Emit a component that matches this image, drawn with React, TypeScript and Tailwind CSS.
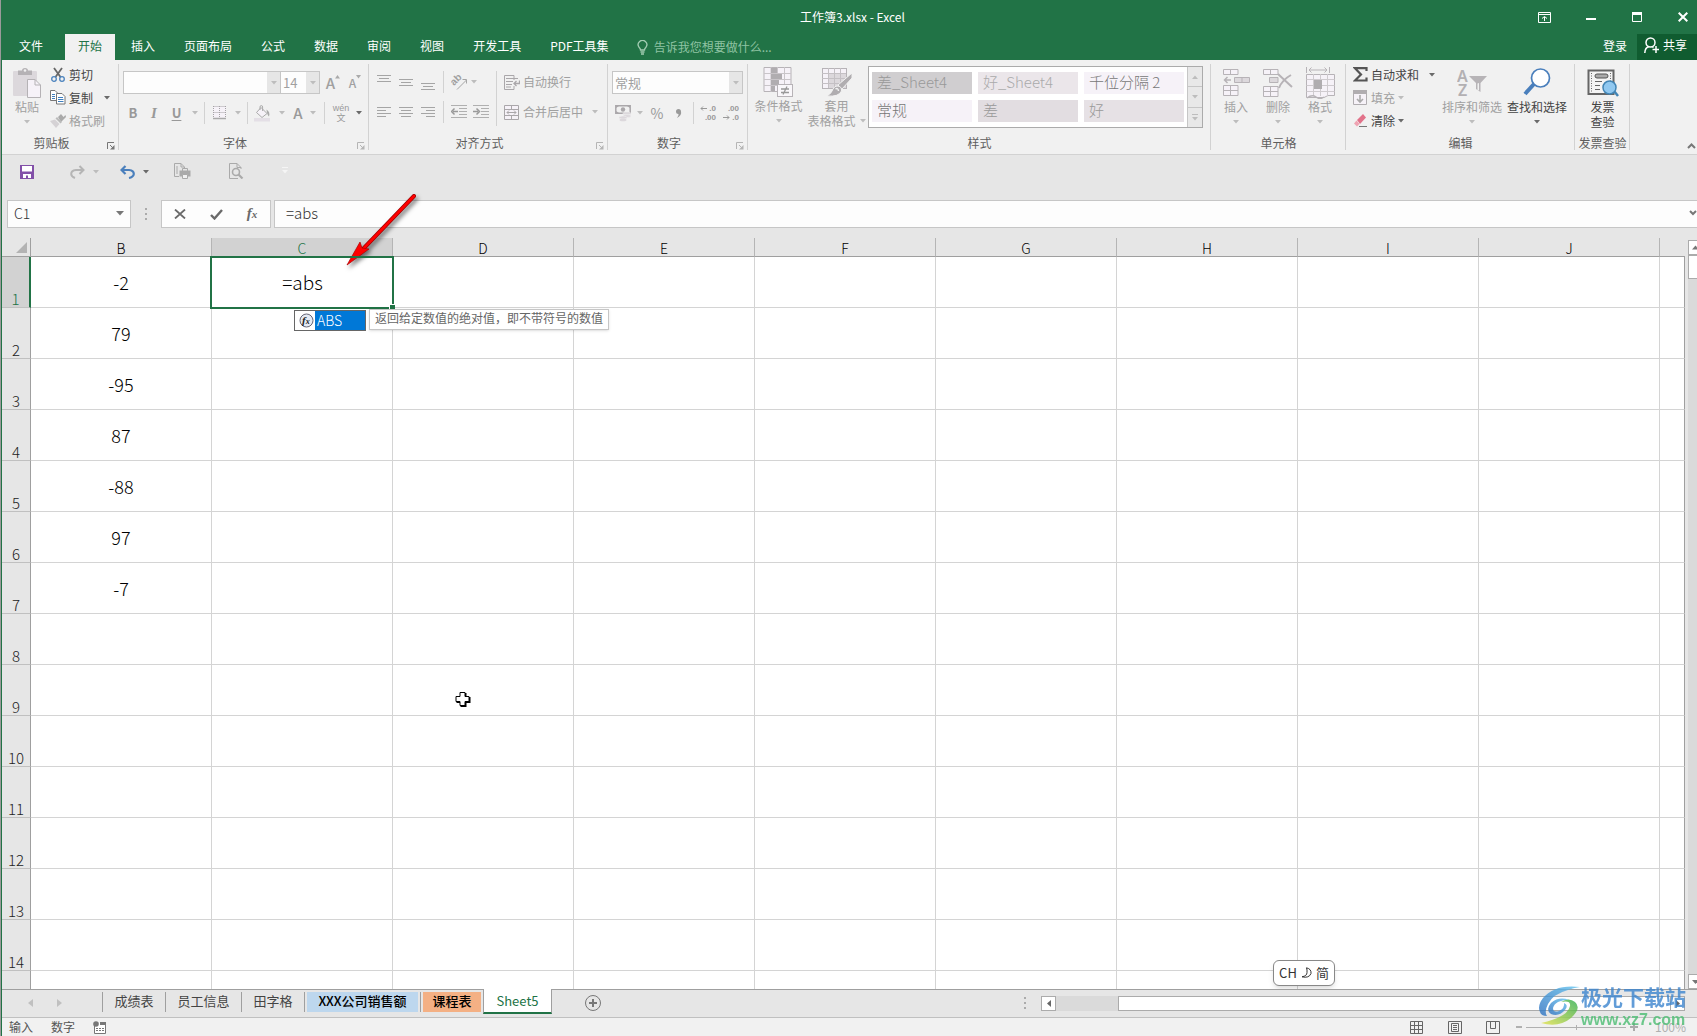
import type { ReactNode } from "react";
import clsx from "clsx";

/* ---------- shared pieces ---------- */

function Caret({ dark = false }: { dark?: boolean }) {
  return (
    <svg width="6" height="4" viewBox="0 0 6 4" className={clsx("shrink-0", dark ? "text-[#6a6a6a]" : "text-[#bdbdbd]")}>
      <path d="M0 0H6L3 3.5Z" fill="currentColor" />
    </svg>
  );
}

function Launcher({ dark = false }: { dark?: boolean }) {
  return (
    <svg width="8" height="8" viewBox="0 0 8 8" className={dark ? "text-[#777]" : "text-[#b5b5b5]"}>
      <path d="M.5 7V.5H7M3 3l3 3" fill="none" stroke="currentColor" />
      <path d="M7.5 3v4.500H3Z" fill="currentColor" />
    </svg>
  );
}

function Group({ label, width, launcher, children, className }: {
  label: string; width: string; launcher?: "dark" | "light"; children: ReactNode; className?: string;
}) {
  return (
    <section aria-label={label} className={clsx("relative flex shrink-0 flex-col", width)}>
      <div className={clsx("flex h-[75px] items-start", className)}>{children}</div>
      <div className={clsx("text-center leading-4 whitespace-nowrap text-[#5e5e5e]", launcher && "pr-[18px]")}>{label}</div>
      {launcher && (
        <button aria-label={label + "设置"} className="absolute right-1 bottom-1">
          <Launcher dark={launcher === "dark"} />
        </button>
      )}
      <span className="absolute top-1 right-0 h-[86px] w-px bg-[#d2d2d2]" />
    </section>
  );
}

function BigButton({ icon, lines, dark = false, caret = true, inlineCaret = false, width }: {
  icon: ReactNode; lines: string[]; dark?: boolean; caret?: boolean; inlineCaret?: boolean; width: string;
}) {
  return (
    <button className={clsx("flex shrink-0 flex-col items-center leading-[15px] whitespace-nowrap", width, dark ? "text-[#444]" : "text-[#a0a0a0]")}>
      <span className="flex h-8 items-center">{icon}</span>
      <span>{lines[0]}</span>
      {lines[1] && (
        <span className="flex items-center gap-1">
          {lines[1]}
          {inlineCaret && <Caret />}
        </span>
      )}
      {caret && !inlineCaret && (
        <span className="flex h-[15px] items-center"><Caret dark={dark} /></span>
      )}
    </button>
  );
}

function Combo({ label, value, width }: { label: string; value: string; width: string }) {
  return (
    <label className={clsx("relative flex h-[23px] border border-[#c6c6c6] bg-[#fdfdfd]", width)}>
      <select aria-label={label} defaultValue={value} className="w-full appearance-none bg-transparent px-0.5 text-[13px] leading-5 text-[#a0a0a0] outline-none">
        <option>{value}</option>
      </select>
      <span className="pointer-events-none absolute inset-y-0 right-0 flex w-[13px] items-center justify-center bg-[#e6e6e6]">
        <Caret />
      </span>
    </label>
  );
}

function IconButton({ label, children, width = "w-[22px]" }: { label: string; children: ReactNode; width?: string }) {
  return (
    <button aria-label={label} className={clsx("flex h-[22px] shrink-0 items-center justify-center", width)}>
      {children}
    </button>
  );
}

function CaretButton({ label, dark, width = "w-[16px]" }: { label: string; dark?: boolean; width?: string }) {
  return (
    <button aria-label={label} className={clsx("flex h-[22px] shrink-0 items-center justify-center", width)}>
      <Caret dark={dark} />
    </button>
  );
}

function Rule({ height = "h-[22px]" }: { height?: string }) {
  return <span className={clsx("w-px shrink-0 bg-[#d2d2d2]", height)} />;
}

/* ---------- icons ---------- */

const PasteIcon = () => (
  <svg width="30" height="32" viewBox="0 0 30 32">
    <rect x="1" y="4" width="24" height="25" rx="1" fill="#dcd8dc" />
    <path d="M6 8V3.500H10Q10 1 13 1T16 3.500H20V8Z" fill="#b5b2b5" />
    <circle cx="13" cy="3.500" r="1.300" fill="#f1f1f1" />
    <path d="M15.500 12.500H23L28.500 18V30.500H15.500Z" fill="#f6f2f8" stroke="#b5b2b5" />
    <path d="M23 12.500V18H28.500" fill="none" stroke="#b5b2b5" />
  </svg>
);
const ScissorsIcon = () => (
  <svg width="14" height="16" viewBox="0 0 14 16">
    <path d="M3 1L9.500 10M11 1L4.500 10" stroke="#666" strokeWidth="1.800" />
    <circle cx="3" cy="12" r="2.300" fill="none" stroke="#4a82bd" strokeWidth="1.300" />
    <circle cx="11" cy="12" r="2.300" fill="none" stroke="#4a82bd" strokeWidth="1.300" />
  </svg>
);
const CopyIcon = () => (
  <svg width="16" height="15" viewBox="0 0 16 15">
    <path d="M.5.5H5L7.500 3V10.500H.5Z" fill="#fff" stroke="#777" />
    <path d="M2 4.500H5M2 6.500H5M2 8.500H5" stroke="#3f7fbf" />
    <path d="M6.500 3.500H12L15 6.500V14H6.500Z" fill="#fff" stroke="#777" />
    <path d="M8 7.500H13M8 9.500H13.500M8 11.500H13.500" stroke="#3f7fbf" />
  </svg>
);
const BrushIcon = () => (
  <svg width="16" height="14" viewBox="0 0 16 14">
    <path d="M8 3L11 0 13.500 3 15.500 1 16 3 11 8Z" fill="#aaa" />
    <path d="M7 3L12 8 10.500 9.500 5.500 4.500Z" fill="#bbb" />
    <path d="M5 5.500L9.500 10 6 14 0 7Z" fill="#d5d2d5" />
  </svg>
);
const BordersIcon = () => (
  <svg width="14" height="14" viewBox="0 0 14 14">
    <rect width="13" height="12" fill="#f6f2f8" />
    <path d="M.5.5H13M.5 6.500H13M.5 0V12M6.500 0V12M12.500 0V12" stroke="#a5a2a5" strokeDasharray="1 1" fill="none" />
    <path d="M0 12.500H13" stroke="#aaa" strokeWidth="1.500" />
  </svg>
);
const BucketIcon = () => (
  <svg width="17" height="17" viewBox="0 0 17 17">
    <path d="M7 2.500L13 8.500 8 12.500 2.500 7.500Z" fill="#f6f2f8" stroke="#aaa" />
    <path d="M6 5V2Q6 .6 7.300.6T8.600 2V6" fill="none" stroke="#aaa" />
    <path d="M12.500 4.500Q16.500 7 15 11.500Q13 10 12.500 4.500Z" fill="#aaa" />
    <rect y="13" width="16" height="3.500" fill="#e4dfe6" />
  </svg>
);

function Lines({ rows, y }: { rows: [number, number][]; y: number }) {
  return (
    <svg width="14" height="16" viewBox="0 0 14 16">
      {rows.map(([x, w], i) => <rect key={i} x={x} y={y + i * 3} width={w} height="1" fill="#a5a5a5" />)}
    </svg>
  );
}
const OrientIcon = () => (
  <svg width="17" height="17" viewBox="0 0 17 17" fill="none" stroke="#a5a5a5">
    <text x="3" y="12" transform="rotate(-45 3 12)" fontFamily="Liberation Sans" fontSize="10" fontWeight="bold" fill="#a0a0a0" stroke="none">ab</text>
    <path d="M6 15.500L15.500 6M15.500 9.500V5.500H11.500" />
  </svg>
);
const IndentIcon = ({ flip = false }: { flip?: boolean }) => (
  <svg width="16" height="14" viewBox="0 0 16 14">
    <path d="M0 .5H16M8 3.500H16M8 6.500H16M8 9.500H16M0 12.500H16" stroke="#b0b0b0" />
    <path d={flip ? "M0 6.500H5M3.500 3.500L6.500 6.500 3.500 9.500" : "M7 6.500H2M3.500 3.500L.5 6.500 3.500 9.500"} stroke="#999" strokeWidth="1.500" fill="none" />
  </svg>
);
const WrapIcon = () => (
  <svg width="16" height="15" viewBox="0 0 16 15" fill="none" stroke="#aaa7aa">
    <path d="M10 .5H.5V14.500H10V11M10 .5V5" /><path d="M2 3.500H14M2 6.500H9M2 9.500H8M2 12H7" />
    <path d="M15.500 5.500V8.500H10.500M12.500 6L10 8.500 12.500 11" strokeWidth="1.300" />
  </svg>
);
const MergeIcon = () => (
  <svg width="16" height="15" viewBox="0 0 16 15" fill="none" stroke="#aaa7aa">
    <path fill="#f6f2f8" d="M.5.5H14.500V14.500H.5Z" /><path d="M.5 4.500H14.500M.5 10.500H14.500M7.500.5V4M7.500 11V14.500M3 7.500H12M5 5.500L3 7.500 5 9.500M10 5.500L12 7.500 10 9.500" />
  </svg>
);
const MoneyIcon = () => (
  <svg width="17" height="17" viewBox="0 0 17 17">
    <path d="M.8.8H15.200V8.200H.8Z" fill="#f1f1f1" stroke="#aaa7aa" strokeWidth="1.500" />
    <circle cx="8" cy="4.500" r="2.200" fill="#aaa7aa" /><path d="M1 3V1H4ZM12 1H15V3ZM1 6V8H4Z" fill="#aaa7aa" />
    <ellipse cx="12" cy="8.500" rx="4" ry="1.500" fill="#dcd8dc" stroke="#f1f1f1" strokeWidth=".5" /><ellipse cx="12" cy="11" rx="4" ry="1.500" fill="#dcd8dc" stroke="#f1f1f1" strokeWidth=".5" />
    <ellipse cx="8" cy="12.500" rx="4" ry="1.500" fill="#dcd8dc" stroke="#f1f1f1" strokeWidth=".5" /><ellipse cx="8" cy="15" rx="3.500" ry="1.300" fill="#dcd8dc" />
  </svg>
);
const Decimals = ({ more = false }: { more?: boolean }) => (
  <span className="relative flex w-4 flex-col text-right font-['Liberation_Sans',sans-serif] text-[8px] leading-[9px] font-bold text-[#999]">
    <span>{more ? ".0" : ".00"}</span>
    <span>{more ? ".00" : ".0"}</span>
    <svg width="7" height="5" viewBox="0 0 7 5" className={clsx("absolute left-0", more ? "top-0.5" : "bottom-0.5")}>
      <path d={more ? "M7 2.500H1M3 .5L1 2.500 3 4.500" : "M0 2.500H6M4 .5L6 2.500 4 4.500"} fill="none" stroke="#999" />
    </svg>
  </span>
);
const CondIcon = () => (
  <svg width="31" height="32" viewBox="0 0 31 32">
    <path d="M1 1.500H28V25.500H1Z" fill="#f6f2f8" stroke="#b7b3b7" />
    <path d="M8 1V26M14.500 1V26M21.500 1V26M1 7.500H28M1 13.500H28M1 19.500H28" stroke="#c9c5c9" />
    <path d="M8 2H14V7H8ZM8 8H19V13H8ZM8 14H16V19H8ZM8 20H12V25H8Z" fill="#b0adb0" />
    <rect x="14.500" y="18.500" width="15" height="12" fill="#f9f7fa" stroke="#b7b3b7" />
    <path d="M18 23H26M18 26.500H26M24 20.500L20 28.500" stroke="#999" strokeWidth="1.300" />
  </svg>
);
const TableFormatIcon = () => (
  <svg width="30" height="30" viewBox="0 0 30 30">
    <rect x=".5" y="1.500" width="24" height="20" fill="#f6f2f8" stroke="#b7b3b7" />
    <rect x="7" y="7" width="17" height="14" fill="#dcd8dc" />
    <path d="M6.500 1V21M12.500 1V21M18.500 1V21M0 6.500H24M0 11.500H24M0 16.500H24" stroke="#c4c0c4" />
    <path d="M30 6V11L20 22 16 18Z" fill="#b0adb0" stroke="#f1f1f1" />
    <path d="M15 19Q20 19 19.500 24Q17 30 5 29Q10 26 11 22Q12.500 19 15 19Z" fill="#b0adb0" stroke="#f1f1f1" />
    <path d="M13.500 22Q16 20.500 16.500 24" fill="none" stroke="#f1f1f1" strokeWidth="1.500" />
  </svg>
);
const InsertIcon = () => (
  <svg width="27" height="30" viewBox="0 0 27 30" fill="#f6f2f8" stroke="#b7b3b7">
    <path d="M.5 1.500H15V6.500H.5ZM7.500 1.500V6.500M.5 17.500H15V27.500H.5ZM7.500 17.500V27.500M.5 22.500H15" />
    <path d="M11.500 9.500H26.500V14.500H11.500ZM19 9.500V14.500" fill="#dcd8dc" />
    <path d="M8 12H2M4.500 9L1.500 12 4.500 15" fill="none" strokeWidth="1.500" />
  </svg>
);
const DeleteIcon = () => (
  <svg width="30" height="30" viewBox="0 0 30 30" fill="#f6f2f8" stroke="#b7b3b7">
    <path d="M.5 1.500H15V6.500H.5ZM7.500 1.500V6.500M.5 18.500H15V28.500H.5ZM7.500 18.500V28.500M.5 23.500H15" />
    <path d="M6.500 9.500H15V14.500H6.500Z" fill="#dcd8dc" />
    <path d="M15 6L29 19M28 7Q19 12 16 20" fill="none" strokeWidth="2" />
  </svg>
);
const FormatIcon = () => (
  <svg width="29" height="32" viewBox="0 0 29 32" fill="none" stroke="#b7b3b7">
    <path d="M.5 0V6M23.500 0V6M3 3H21M5.500.5L3 3 5.500 5.500M18.500.5L21 3 18.500 5.500" />
    <path d="M.5 7.500H28.500V28.500H22L18 30.500H.5Z" fill="#f6f2f8" />
    <path d="M7.500 7V29M14.500 7V29M21.500 7V29M.5 12.500H28.500M.5 18.500H28.500M.5 24.500H28.500" stroke="#cfcbcf" />
    <rect x="8" y="13" width="8" height="9" fill="#b0adb0" stroke="none" />
    <path d="M1 31Q6 27 10 30T18 30" strokeWidth="1.500" />
  </svg>
);
const SigmaIcon = () => (
  <svg width="15" height="15" viewBox="0 0 15 15"><path d="M13.500 4V1.200H2L8 7.500 2 13.500H13.500V10.500" fill="none" stroke="#555" strokeWidth="2.200" /></svg>
);
const FillIcon = () => (
  <svg width="15" height="15" viewBox="0 0 15 15"><path d="M.5.5H13.500V14.500H.5Z" fill="#f6f2f8" stroke="#b0adb0" /><path d="M0 0H14V4H0Z" fill="#b0adb0" /><path d="M7 5V12M4 9L7 12 10 9" fill="none" stroke="#aaa" strokeWidth="1.600" /></svg>
);
const EraserIcon = () => (
  <svg width="15" height="14" viewBox="0 0 15 14"><path d="M4 6L10 0 13 3.500 7 10Z" fill="#e2728a" /><path d="M3.500 6.500L6.500 10 4 12.500 1 9.500Z" fill="#efa3b2" /><path d="M6 12.500H14" stroke="#777" /></svg>
);
const SortIcon = () => (
  <svg width="30" height="30" viewBox="0 0 30 30">
    <g fontFamily="Noto Sans" fontSize="16" fontWeight="600" fill="#b3b0b3">
      <text x="0" y="14">A</text>
      <text x="1" y="28">Z</text>
    </g>
    <path d="M12 8H30L23.500 15V24L19 21V15Z" fill="#b7b4b7" /><path d="M20.500 15.500V23L22 22V15Z" fill="#f1f1f1" />
  </svg>
);
const FindIcon = () => (
  <svg width="28" height="30" viewBox="0 0 28 30"><path d="M11 16L2 26" stroke="#4a7fbc" strokeWidth="4" /><circle cx="17.500" cy="10" r="9" fill="#fff" stroke="#4a7fbc" strokeWidth="1.700" /></svg>
);
const InvoiceIcon = () => (
  <svg width="32" height="29" viewBox="0 0 32 29">
    <path d="M1.500 1.500H26.500V25H1.500Z" fill="#f4f4f4" stroke="#666" strokeWidth="2" /><path d="M4.500 4V23M23.500 4V13" stroke="#666" strokeDasharray="1 1.500" />
    <rect x="8" y="5" width="13" height="4" rx="2" fill="#aaa" stroke="#555" /><path d="M8 12.500H15M8 16.500H13M8 20.500H13" stroke="#666" />
    <path d="M27 22L31 27" stroke="#4285b5" strokeWidth="2.500" /><circle cx="22.500" cy="18.500" r="6.500" fill="#90c8f0" stroke="#4285b5" strokeWidth="1.500" />
  </svg>
);

/* ---------- window chrome ---------- */

const TABS = ["文件", "开始", "插入", "页面布局", "公式", "数据", "审阅", "视图", "开发工具", "PDF工具集"];

function TitleBar() {
  return (
    <header className="bg-[#217346] text-white">
      <div className="grid h-[34px] grid-cols-[1fr_auto_1fr] items-center">
        <span />
        <h1 className="pl-1.5 text-[12px]">工作簿3.xlsx - Excel</h1>
        <div className="flex items-center justify-end gap-[18px]">
          <button aria-label="功能区显示选项" className="flex w-[29px] justify-center">
            <svg width="13" height="11" viewBox="0 0 13 11" fill="none" stroke="#fff"><path d="M.5.5H12.500V10.500H.5ZM.5 2.500H12.500M6.500 9V5M4 6.500L6.500 4.500 9 6.500" /></svg>
          </button>
          <button aria-label="最小化" className="flex w-7 justify-center">
            <svg width="10" height="10" viewBox="0 0 10 10"><path d="M0 7H10" stroke="#fff" strokeWidth="2" /></svg>
          </button>
          <button aria-label="最大化" className="flex w-7 justify-center">
            <svg width="10" height="10" viewBox="0 0 10 10"><path d="M.5.5H9.500V9.500H.5Z" fill="none" stroke="#fff" /><path d="M0 0H10V3H0Z" fill="#fff" /></svg>
          </button>
          <button aria-label="关闭" className="flex w-7 justify-center">
            <svg width="10" height="10" viewBox="0 0 10 10"><path d="M.7.7L9.300 9.300M9.300.7L.7 9.300" stroke="#fff" strokeWidth="2" /></svg>
          </button>
        </div>
      </div>
      <div className="flex h-[26px] items-stretch">
        <nav className="flex gap-px pl-[3px]">
          {TABS.map((t) => (
            <button key={t} className={clsx("pb-[3px]", t === "开始" ? "bg-[#f1f1f1] px-[13px] text-[#217346]" : "px-3.5 text-white", t === "文件" && "mr-[7px]", t === "开始" && "mr-px")}>{t}</button>
          ))}
        </nav>
        <label className="ml-[14px] flex items-center text-[#8fc3a3]">
          <svg width="11" height="15" viewBox="0 0 11 15" fill="none" stroke="#a3cdb3" strokeWidth="1.300" className="mr-1.5"><path d="M3.500 10Q3.500 8.500 2 7.200A4.300 4.300 0 1 1 9 7.200Q7.500 8.500 7.500 10ZM3.500 12H7.500M4 14H7" /></svg>
          <input aria-label="操作说明搜索" placeholder="告诉我您想要做什么..." className="w-36 bg-transparent outline-none placeholder:text-[#8fc3a3]" />
        </label>
        <div className="ml-auto flex items-stretch">
          <button className="px-2.5 pb-[3px]">登录</button>
          <button className="flex w-[60px] items-center gap-1 bg-[#105c30] pb-1 pl-[7px]">
            <svg width="15" height="17" viewBox="0 0 15 17" fill="none" stroke="#fff" strokeWidth="1.500"><circle cx="6.500" cy="5.500" r="4.500" /><path d="M.8 16Q1 10.500 5 9.500M8 9.500L9.500 10.500M12 9V16M8.500 12.500H15.500" /></svg>
            共享
          </button>
        </div>
      </div>
    </header>
  );
}

/* ---------- ribbon ---------- */

const STYLES = [
  { name: "差_Sheet4", cls: "bg-[#d0ced0] text-[#999]" },
  { name: "好_Sheet4", cls: "bg-[#ebe6ea] text-[#aaa]" },
  { name: "千位分隔 2", cls: "bg-[#f6f2f8] text-[#777]" },
  { name: "常规", cls: "bg-[#f6f2f8] text-[#777]" },
  { name: "差", cls: "bg-[#e2dde1] text-[#999]" },
  { name: "好", cls: "bg-[#e6e1e5] text-[#999]" },
];

const L: Record<string, [number, number][]> = {
  full: [[0, 14], [2, 10], [0, 14]],
  left: [[0, 14], [0, 9], [0, 14], [0, 9]],
  center: [[0, 14], [2, 10], [0, 14], [2, 10]],
  right: [[0, 14], [5, 9], [0, 14], [5, 9]],
};

function SmallButton({ children, dark = false }: { children: ReactNode; dark?: boolean }) {
  return <button className={clsx("flex h-[23px] items-center gap-[3px] pb-2 whitespace-nowrap", dark ? "text-[#444]" : "text-[#a0a0a0]")}>{children}</button>;
}

function Ribbon() {
  return (
    <div className="relative flex h-[95px] border-b border-[#d2d2d2] bg-[#f1f1f1]">
      <Group label="剪贴板" width="w-[117px]" launcher="dark" className="gap-2 pt-[7px] pl-2.5">
        <BigButton icon={<PasteIcon />} lines={["粘贴"]} width="w-[30px]" />
        <div className="flex flex-col">
          <SmallButton dark><span className="flex w-4 justify-center"><ScissorsIcon /></span>剪切</SmallButton>
          <SmallButton dark><CopyIcon />复制<span className="ml-2"><Caret dark /></span></SmallButton>
          <SmallButton><BrushIcon />格式刷</SmallButton>
        </div>
      </Group>

      <Group label="字体" width="w-[250px]" launcher="light" className="flex-col gap-2 pt-[11px] pl-1">
        <div className="flex items-center">
          <Combo label="字体" value="" width="w-[158px]" />
          <Combo label="字号" value="14" width="w-[40px] -ml-px" />
          <button aria-label="增大字号" className="flex w-[26px] items-start justify-center text-[15px] leading-4 font-medium text-[#a0a0a0]">A<svg width="5" height="4" viewBox="0 0 5 4"><path d="M0 3.500L2.500 0 5 3.500Z" fill="#aaa" /></svg></button>
          <button aria-label="减小字号" className="flex w-[18px] items-start justify-center text-[12px] leading-4 font-medium text-[#a0a0a0]">A<svg width="5" height="4" viewBox="0 0 5 4"><path d="M0 0L2.500 3.500 5 0Z" fill="#aaa" /></svg></button>
        </div>
        <div className="flex h-[22px] items-center text-[13px] text-[#999]">
          <IconButton label="加粗" width="w-[20px]"><b>B</b></IconButton>
          <IconButton label="倾斜"><i className="font-['Liberation_Serif',serif] text-[15px] font-bold">I</i></IconButton>
          <IconButton label="下划线" width="w-[23px]"><span className="font-bold underline underline-offset-2">U</span></IconButton>
          <CaretButton label="下划线选项" width="w-[14px]" />
          <span className="w-0.5" />
          <Rule />
          <IconButton label="边框" width="w-[30px]"><BordersIcon /></IconButton>
          <CaretButton label="边框选项" width="w-[6px]" />
          <span className="w-1.5" />
          <Rule />
          <IconButton label="填充颜色" width="w-[28px]"><BucketIcon /></IconButton>
          <CaretButton label="填充颜色选项" width="w-[12px]" />
          <IconButton label="字体颜色" width="w-[20px]"><span className="text-[15px] font-medium">A</span></IconButton>
          <CaretButton label="字体颜色选项" width="w-[10px]" />
          <span className="w-1.5" />
          <Rule />
          <IconButton label="拼音指南" width="w-[32px]">
            <span className="flex flex-col items-center text-[#999]">
              <span className="font-['Liberation_Sans',sans-serif] text-[9px] leading-[10px]">wén</span>
              <span className="text-[9px] leading-[10px]">文</span>
            </span>
          </IconButton>
          <CaretButton label="拼音选项" dark width="w-[4px]" />
        </div>
      </Group>

      <Group label="对齐方式" width="w-[239px]" launcher="light" className="pt-[11px] pl-1">
        <div className="flex w-[123px] flex-col gap-2">
          <div className="flex items-center">
            <IconButton label="顶端对齐"><Lines rows={L.full} y={1} /></IconButton>
            <IconButton label="垂直居中"><Lines rows={L.full} y={5} /></IconButton>
            <IconButton label="底端对齐"><Lines rows={L.full} y={9} /></IconButton>
            <span className="w-1" /><Rule />
            <IconButton label="方向" width="w-[30px]"><OrientIcon /></IconButton>
            <CaretButton label="方向选项" width="w-[0px]" />
          </div>
          <div className="flex items-center">
            <IconButton label="左对齐"><Lines rows={L.left} y={3} /></IconButton>
            <IconButton label="居中"><Lines rows={L.center} y={3} /></IconButton>
            <IconButton label="右对齐"><Lines rows={L.right} y={3} /></IconButton>
            <span className="w-1" /><Rule /><span className="w-1" />
            <IconButton label="减少缩进量"><IndentIcon /></IconButton>
            <IconButton label="增加缩进量"><IndentIcon flip /></IconButton>
          </div>
        </div>
        <Rule height="h-[55px]" />
        <div className="flex flex-col gap-2 pl-[7px] whitespace-nowrap text-[#a0a0a0]">
          <button className="flex h-[22px] items-center gap-[3px]"><WrapIcon />自动换行</button>
          <button className="flex h-[22px] items-center gap-[3px]"><MergeIcon />合并后居中<span className="ml-1.5"><Caret /></span></button>
        </div>
      </Group>

      <Group label="数字" width="w-[140px]" launcher="light" className="flex-col gap-2 pt-[11px] pl-1">
        <Combo label="数字格式" value="常规" width="w-[131px]" />
        <div className="flex h-[22px] items-center text-[#999]">
          <IconButton label="会计数字格式"><MoneyIcon /></IconButton>
          <CaretButton label="会计格式选项" width="w-[11px]" />
          <IconButton label="百分比样式" width="w-[24px]"><span className="text-[14px]">%</span></IconButton>
          <IconButton label="千位分隔样式" width="w-[19px]"><svg width="6" height="9" viewBox="0 0 6 9"><path d="M0 2.500A2.500 2.500 0 0 1 5 2.500Q6 6 1 9Q3 6 2.500 5A2.500 2.500 0 0 1 0 2.500Z" fill="#999" /></svg></IconButton>
          <span className="w-[5px]" /><Rule />
          <IconButton label="增加小数位数" width="w-[28px]"><Decimals more /></IconButton>
          <IconButton label="减少小数位数" width="w-[18px]"><Decimals /></IconButton>
        </div>
      </Group>

      <Group label="样式" width="w-[463px]" className="pt-[6px] pl-1">
        <BigButton icon={<CondIcon />} lines={["条件格式"]} width="w-[53px]" />
        <BigButton icon={<TableFormatIcon />} lines={["套用", "表格格式"]} inlineCaret width="w-[63px]" />
        <div className="flex h-[62px] border border-[#ababab] bg-white">
          <div className="grid grid-cols-3 gap-1.5 px-[3px] py-[5px]">
            {STYLES.map((s) => (
              <button key={s.name} className={clsx("h-[22px] w-[100px] px-[5px] pb-0.5 text-left text-[15px] leading-5 font-light", s.cls)}>{s.name}</button>
            ))}
          </div>
          <div className="flex w-[15px] flex-col divide-y divide-[#c6c6c6] border-l border-[#c6c6c6] bg-[#e8e8e8]">
            <button aria-label="上一行" className="flex flex-1 items-center justify-center"><span className="rotate-180"><Caret /></span></button>
            <button aria-label="下一行" className="flex flex-1 items-center justify-center"><Caret /></button>
            <button aria-label="其他样式" className="flex flex-1 flex-col items-center justify-center gap-0.5"><span className="h-px w-1.5 bg-[#bdbdbd]" /><Caret /></button>
          </div>
        </div>
      </Group>

      <Group label="单元格" width="w-[135px]" className="pt-[7px] pl-1">
        <BigButton icon={<InsertIcon />} lines={["插入"]} width="w-[42px]" />
        <BigButton icon={<DeleteIcon />} lines={["删除"]} width="w-[42px]" />
        <BigButton icon={<FormatIcon />} lines={["格式"]} width="w-[42px]" />
      </Group>

      <Group label="编辑" width="w-[229px]" className="pt-[7px] pl-[7px]">
        <div className="flex w-[85px] flex-col">
          <SmallButton dark><SigmaIcon />自动求和<span className="ml-[7px]"><Caret dark /></span></SmallButton>
          <SmallButton><FillIcon />填充<Caret /></SmallButton>
          <SmallButton dark><EraserIcon />清除<Caret dark /></SmallButton>
        </div>
        <BigButton icon={<SortIcon />} lines={["排序和筛选"]} width="w-[68px]" />
        <BigButton icon={<FindIcon />} lines={["查找和选择"]} dark width="w-[62px]" />
      </Group>

      <Group label="发票查验" width="w-[55px]" className="justify-center pt-[7px]">
        <BigButton icon={<InvoiceIcon />} lines={["发票", "查验"]} dark caret={false} width="w-[50px]" />
      </Group>
      <button aria-label="折叠功能区" className="mt-auto mb-[5px] ml-auto pr-px">
        <svg width="9" height="6" viewBox="0 0 9 6"><path d="M1 5L4.500 1.500 8 5" fill="none" stroke="#777" strokeWidth="2" /></svg>
      </button>
    </div>
  );
}

function QuickAccess() {
  return (
    <div className="flex h-[35px] items-end pb-[11px] pl-[18px]">
      <button aria-label="保存" className="mr-9">
        <svg width="14" height="14" viewBox="0 0 14 14"><path d="M0 0H14V14H0Z" fill="#8250a8" /><path d="M2 1H12V6.500H2ZM3 9H11V13H8V10.500H6V13H3Z" fill="#fff" /></svg>
      </button>
      <button aria-label="恢复" className="mr-2">
        <svg width="15" height="14" viewBox="0 0 15 14" fill="none" stroke="#b5b5b5" strokeWidth="2"><path d="M13 5H6Q1.200 5.500 1.200 9Q1.200 11.500 5 13M9.500 1L13.500 5 9.500 9" /></svg>
      </button>
      <button aria-label="恢复选项" className="mr-[21px] pb-[5px]"><Caret /></button>
      <button aria-label="撤消" className="mr-2">
        <svg width="15" height="14" viewBox="0 0 15 14" fill="none" stroke="#4a7fbc" strokeWidth="2.200"><path d="M2 5H9Q13.800 5.500 13.800 9Q13.500 12 9 13M5.500 1L1.500 5 5.500 9" /></svg>
      </button>
      <button aria-label="撤消选项" className="mr-[25px] pb-[5px]"><Caret dark /></button>
      <button aria-label="快速打印" className="mr-[38px]">
        <svg width="17" height="16" viewBox="0 0 17 16" fill="none" stroke="#aaa"><path d="M5 13.500H.5V.5H7L10.500 4V6M7 .5V4H10M3 3V11" /><path d="M8.500 8V5.500H13.500V8" /><rect x="6" y="8" width="10" height="5" fill="#aaa" /><path d="M8.500 11.500H13.500V15.500H8.500Z" fill="#f1f1f1" /></svg>
      </button>
      <button aria-label="打印预览" className="mr-[38px]">
        <svg width="15" height="16" viewBox="0 0 15 16" fill="none" stroke="#aaa"><path d="M9 15.500H.5V.5H8L12 4.500V6M8 .5V4.500H12" /><circle cx="7" cy="9" r="3.500" strokeWidth="1.600" /><path d="M9.500 11.500L13.500 15.500" strokeWidth="2.200" /></svg>
      </button>
      <button aria-label="自定义快速访问工具栏" className="flex flex-col items-center gap-0.5 pb-[5px]">
        <span className="h-px w-1.5 bg-[#f5f5f5]" />
        <svg width="6" height="4" viewBox="0 0 6 4"><path d="M0 0H6L3 3.500Z" fill="#f5f5f5" /></svg>
      </button>
    </div>
  );
}

function FormulaBar() {
  return (
    <div className="mt-[10px] flex h-7 items-stretch pl-[5px] text-[14px] text-[#555]">
      <label className="flex w-[124px] items-center border border-[#c6c6c6] bg-[#fdfdfd] px-1.5 pb-0.5">
        <input aria-label="名称框" defaultValue="C1" className="min-w-0 flex-1 bg-transparent font-light text-[#333] outline-none" />
        <svg width="8" height="5" viewBox="0 0 8 5"><path d="M0 0H8L4 4.500Z" fill="#777" /></svg>
      </label>
      <span className="flex w-[30px] flex-col items-center justify-center gap-[3px]">
        <i className="size-0.5 bg-[#ababab]" /><i className="size-0.5 bg-[#ababab]" /><i className="size-0.5 bg-[#ababab]" />
      </span>
      <div className="mr-[3px] grid w-[110px] grid-cols-3 border border-[#c6c6c6] bg-[#fdfdfd]">
        <button aria-label="取消" className="flex items-center justify-center">
          <svg width="12" height="10" viewBox="0 0 12 10"><path d="M1 .5L11 9.500M11 .5L1 9.500" stroke="#6a6a6a" strokeWidth="1.800" /></svg>
        </button>
        <button aria-label="输入" className="flex items-center justify-center">
          <svg width="13" height="11" viewBox="0 0 13 11"><path d="M1 6L4.500 9.500 12 1" fill="none" stroke="#6a6a6a" strokeWidth="2.400" /></svg>
        </button>
        <button aria-label="插入函数" className="pb-0.5 font-['Liberation_Serif',serif] text-[15px] font-bold text-[#6a6a6a] italic">f<span className="text-[11px]">x</span></button>
      </div>
      <label className="flex flex-1 items-center border-y border-l border-[#c6c6c6] bg-[#fdfdfd] pb-0.5 pl-[11px]">
        <input aria-label="编辑栏" defaultValue="=abs" className="min-w-0 flex-1 bg-transparent text-[15px] font-light text-[#333] outline-none" />
        <svg width="8" height="6" viewBox="0 0 8 6"><path d="M1 1L4 4 7 1" fill="none" stroke="#777" strokeWidth="2" /></svg>
      </label>
    </div>
  );
}

/* ---------- worksheet ---------- */

const COLS = ["B", "C", "D", "E", "F", "G", "H", "I", "J"];
const VALUES = ["-2", "79", "-95", "87", "-88", "97", "-7"];
const ROWS = Array.from({ length: 14 }, (_, i) => i + 1);

function ActiveCell() {
  return (
    <>
      <input aria-label="C1" defaultValue="=abs" className="block w-full pb-px pl-px text-center text-[19px] outline-none" />
      <span className="pointer-events-none absolute -top-px -right-0.5 -bottom-0.5 -left-0.5 z-10 border-2 border-[#217346]">
        <span className="absolute -right-[3px] -bottom-[3px] size-[6px] border-t border-l border-white bg-[#217346]" />
      </span>
      <div className="absolute top-[53px] left-[82px] z-10 flex items-start gap-[3px]">
        <button className="flex h-[21px] w-[72px] border border-[#666] bg-white text-left text-[14px] leading-[19px]">
          <svg width="20" height="19" viewBox="0 0 20 19" className="shrink-0">
            <circle cx="11.500" cy="9.500" r="6.500" fill="#e4eaf4" stroke="#667" />
            <text x="7" y="13" fontFamily="Liberation Serif" fontStyle="italic" fontWeight="bold" fontSize="11" fill="#222">f<tspan fontSize="8">x</tspan></text>
          </svg>
          <span className="flex-1 bg-[#0078d7] pl-0.5 font-light text-white">ABS</span>
        </button>
        <span role="tooltip" className="-mt-px h-[21px] border border-[#c6c6c6] bg-white px-[5px] text-[12px] leading-4 font-normal whitespace-nowrap text-[#666] shadow-sm">
          返回给定数值的绝对值，即不带符号的数值
        </span>
      </div>
    </>
  );
}

function Sheet() {
  return (
    <div className="relative min-w-0 flex-1 overflow-hidden">
      <table className="w-full table-fixed border-separate border-spacing-0">
        <colgroup>
          <col className="w-[29px]" />
          {COLS.map((c) => <col key={c} className="w-[181px]" />)}
          <col />
        </colgroup>
        <thead>
          <tr className="h-[19px] text-[14px] leading-[16px]">
            <th className="border-r border-b border-[#9f9f9f] p-0">
              <svg width="11" height="11" viewBox="0 0 11 11" className="mr-[3px] ml-auto"><path d="M11 0V11H0Z" fill="#b3b3b3" /></svg>
            </th>
            {COLS.map((c) => (
              <th key={c} scope="col" className={clsx("h-[19px] border-r border-b border-r-[#b5b5b5] border-b-[#9f9f9f] p-0 pt-0.5 font-light", c === "C" ? "bg-[#d2d2d2] text-[#217346]" : "text-black")}>{c}</th>
            ))}
            <td className="border-b border-[#9f9f9f] p-0" />
          </tr>
        </thead>
        <tbody>
          {ROWS.map((r) => (
            <tr key={r} className="h-[51px]">
              <th scope="row" className={clsx("h-[51px] border-b border-b-[#c0c0c0] p-0 align-bottom text-[15px] leading-[17px] font-light", r === 1 ? "border-r-2 border-r-[#217346] bg-[#d2d2d2] text-[#217346]" : "border-r border-r-[#9f9f9f] text-[#222]")}>{r}</th>
              {COLS.map((c) => (
                <td key={c} className="relative border-r border-b border-[#d4d4d4] bg-white p-0 text-center text-[18px] font-light text-black">
                  {c === "B" && VALUES[r - 1]}
                  {c === "C" && r === 1 && <ActiveCell />}
                </td>
              ))}
              <td className="border-r border-b border-r-[#9f9f9f] border-b-[#d4d4d4] bg-white p-0" />
            </tr>
          ))}
          <tr className="h-[51px]">
            <td className="border-r border-[#9f9f9f] p-0" />
            {COLS.map((c) => <td key={c} className="border-r border-[#d4d4d4] bg-white p-0" />)}
            <td className="border-r border-[#9f9f9f] bg-white p-0" />
          </tr>
        </tbody>
      </table>
      {/* cell cursor */}
      <svg width="16" height="16" viewBox="0 0 16 16" className="absolute top-[453px] left-[453px]">
        <path d="M5.500 2H11.500V6H15.500V12H11.500V16H5.500V12H1.500V6H5.500Z" fill="#000" />
        <path d="M5 1.500H10V5.500H14V10.500H10V14.500H5V10.500H1V5.500H5Z" fill="#fff" stroke="#000" />
      </svg>
      <div className="absolute bottom-[3px] left-[1271px] flex h-[26px] w-[62px] items-center justify-center gap-1 rounded-md border border-[#888] bg-white text-[13px] text-[#333] shadow-md">
        CH
        <svg width="11" height="12" viewBox="0 0 11 12"><path d="M5.500.8Q10.500 2 10 6.500Q8 11.500 1 9.800Q6 9 6 5.500Q6.300 3 5.500.8Z" fill="none" stroke="#333" /></svg>
        简
      </div>
    </div>
  );
}

function VerticalScroll() {
  return (
    <div className="ml-[3px] flex w-[9px] flex-col overflow-hidden pt-0.5">
      <button aria-label="向上滚动" className="h-[15px] w-[15px] border border-[#ababab] bg-white"><svg width="13" height="13" viewBox="0 0 13 13"><path d="M3 8.500L6.500 4.500 10 8.500Z" fill="#777" /></svg></button>
      <span className="h-6 w-[15px] border border-[#ababab] bg-white" />
      <span className="w-[15px] flex-1 bg-[#dadada]" />
      <button aria-label="向下滚动" className="h-[15px] w-[15px] border border-[#ababab] bg-white"><svg width="13" height="13" viewBox="0 0 13 13"><path d="M3 5L6.500 9 10 5Z" fill="#777" /></svg></button>
    </div>
  );
}

const SHEETS = [
  { name: "成绩表", cls: "w-[63px] text-[#444]" },
  { name: "员工信息", cls: "w-[76px] text-[#444]" },
  { name: "田字格", cls: "w-[63px] text-[#444]" },
];

function SheetTabs() {
  return (
    <div className="relative flex h-[28px] border-t border-[#9f9f9f] text-[13px]">
      <div className="flex w-[100px] items-center gap-[24px] pb-0.5 pl-[26px]">
        <button aria-label="上一个工作表"><svg width="5" height="8" viewBox="0 0 5 8"><path d="M5 0V8L0 4Z" fill="#c0c0c0" /></svg></button>
        <button aria-label="下一个工作表"><svg width="5" height="8" viewBox="0 0 5 8"><path d="M0 0V8L5 4Z" fill="#c0c0c0" /></svg></button>
      </div>
      <div className="flex h-[24px] whitespace-nowrap">
        {SHEETS.map((s) => <button key={s.name} className={clsx("my-0.5 border-l border-[#9f9f9f] pb-0.5 leading-[18px]", s.cls)}>{s.name}</button>)}
        <div className="my-0.5 flex border-l border-[#9f9f9f] px-0.5"><button className="w-[111px] bg-[#bdd7ee] pb-0.5 leading-[18px] font-medium text-black">XXX公司销售额</button></div>
        <div className="my-0.5 flex border-l border-[#9f9f9f] px-0.5"><button className="w-[58px] bg-[#f4b084] pb-0.5 leading-[18px] font-medium text-black">课程表</button></div>
        <button className="-mt-px w-[69px] border-x border-b-2 border-x-[#9f9f9f] border-b-[#217346] bg-white leading-5 text-[#217346]">Sheet5</button>
      </div>
      <button aria-label="新建工作表" className="ml-[33px] pb-0.5">
        <svg width="16" height="16" viewBox="0 0 16 16" fill="none" stroke="#777"><circle cx="8" cy="8" r="7.500" /><path d="M8 4V12M4 8H12" strokeWidth="2" /></svg>
      </button>
      <div className="mr-[12px] ml-auto flex w-[663px] items-center pb-px">
        <span className="mr-[15px] ml-0.5 flex flex-col gap-[3px]"><i className="size-0.5 bg-[#ababab]" /><i className="size-0.5 bg-[#ababab]" /><i className="size-0.5 bg-[#ababab]" /></span>
        <button aria-label="向左滚动" className="flex h-[15px] w-[15px] items-center justify-center border border-[#ababab] bg-white"><svg width="4" height="7" viewBox="0 0 4 7"><path d="M4 0V7L0 3.500Z" fill="#666" /></svg></button>
        <span className="h-[15px] w-[62px] bg-[#dadada]" />
        <span className="h-[15px] flex-1 border border-[#ababab] bg-white" />
        <button aria-label="向右滚动" className="-ml-px flex h-[15px] w-[15px] items-center justify-center border border-[#ababab] bg-white"><svg width="4" height="7" viewBox="0 0 4 7"><path d="M0 0V7L4 3.500Z" fill="#666" /></svg></button>
      </div>
    </div>
  );
}

function StatusBar() {
  return (
    <footer className="flex h-[19px] items-center border-t border-[#c0c0c0] bg-[#f1f1f1] pr-[12px] pl-[7px] text-[#555]">
      <span className="w-[42px]">输入</span>
      <span className="w-[42px]">数字</span>
      <button aria-label="录制宏">
        <svg width="14" height="13" viewBox="0 0 14 13"><path d="M1.500 5V12.500H12.500V1.500H7" fill="#fff" stroke="#777" /><path d="M7 1H13V4H7Z" fill="#777" /><circle cx="3" cy="3" r="2.800" fill="#777" /><path d="M3 7.500H11M3 9.500H11" stroke="#777" strokeDasharray="2 1" /></svg>
      </button>
      <div className="ml-auto flex items-center">
        <button aria-label="普通" className="mr-[25px]"><svg width="13" height="13" viewBox="0 0 13 13" fill="none" stroke="#666"><path d="M.5.5H12.500V12.500H.5ZM4.500.5V12.500M8.500.5V12.500M.5 4.500H12.500M.5 8.500H12.500" /></svg></button>
        <button aria-label="页面布局视图" className="mr-6"><svg width="14" height="13" viewBox="0 0 14 13" fill="none" stroke="#666"><path d="M.5.5H13.500V12.500H.5ZM3.500 2.500H10.500V10.500H3.500ZM5 4.500H9M5 6.500H9M5 8.500H9" /></svg></button>
        <button aria-label="分页预览" className="mr-4"><svg width="14" height="13" viewBox="0 0 14 13" fill="none" stroke="#666"><path d="M.5.5H13.500V12.500H.5ZM4.500.5V7.500H9.500V.5" /></svg></button>
        <button aria-label="缩小" className="mr-1 h-0.5 w-1.5 bg-[#b0b0b0]" />
        <label className="relative flex h-3 w-[100px] items-center">
          <span className="h-px w-full bg-[#b0b0b0]" />
          <span className="absolute left-1/2 h-[5px] w-px bg-[#b0b0b0]" />
          <input type="range" aria-label="缩放" className="absolute inset-0 w-full opacity-0" />
        </label>
        <button aria-label="放大" className="mr-[17px] ml-1"><svg width="8" height="8" viewBox="0 0 8 8"><path d="M4 0V8M0 4H8" stroke="#aaa" strokeWidth="2" /></svg></button>
        <span className="w-[30px] text-[#b0b0b0]">100%</span>
      </div>
    </footer>
  );
}

function Watermark() {
  return (
    <div className="pointer-events-none absolute right-[11px] bottom-[7px] flex items-center opacity-80">
      <svg width="44" height="42" viewBox="0 0 44 42">
        <defs>
          <linearGradient id="wmBlue" x1="0" y1="1" x2="1" y2="0"><stop offset="0" stopColor="#2c6fc0" /><stop offset="1" stopColor="#62c4f0" /></linearGradient>
          <linearGradient id="wmGreen" x1="0" y1="1" x2="1" y2="0"><stop offset="0" stopColor="#e4e34a" /><stop offset="1" stopColor="#2fae4e" /></linearGradient>
        </defs>
        <path d="M43 1Q36 2 31 4Q16 8 11 18Q7 26 10 30Q4 30 3 26Q0 20 6 12Q18-2 43 1Z" fill="url(#wmBlue)" />
        <path d="M32 14Q22 10 14 17Q8 24 14 28Q22 31 28 24Q32 19 27 17Q28 22 22 25Q16 27 16 22Q18 14 32 14Z" fill="url(#wmBlue)" />
        <path d="M24 16Q34 14 33 20Q31 31 4 37Q22 42 34 32Q45 22 38 16Q32 11 24 16Z" fill="url(#wmGreen)" />
      </svg>
      <div className="flex flex-col">
        <span className="text-[21px] leading-[22px] font-bold whitespace-nowrap text-[#3c85cf]">极光下载站</span>
        <span className="pt-1 font-['Liberation_Sans',sans-serif] text-[16px] leading-[18px] font-bold text-[#4bbd72]">www.xz7.com</span>
      </div>
    </div>
  );
}

export default function App() {
  return (
    <div className="relative flex h-screen flex-col overflow-hidden border-l border-[#9a9a9a] bg-[#e6e6e6] font-['Noto_Sans_CJK_SC',sans-serif] text-[12px] leading-4">
      <div className="flex min-h-0 flex-1 flex-col border-l border-[#217346]">
        <TitleBar />
        <Ribbon />
        <QuickAccess />
        <FormulaBar />
        <main className="mt-[10px] flex min-h-0 flex-1">
          <Sheet />
          <VerticalScroll />
        </main>
        <SheetTabs />
        <StatusBar />
      </div>
      {/* annotation arrow over the formula bar and cell C1 */}
      <svg width="80" height="84" viewBox="0 0 80 84" className="pointer-events-none absolute top-[190px] left-[339px] drop-shadow-[2px_3px_2px_rgba(0,0,0,0.5)]">
        <path d="M74 6L24 58" stroke="#900" strokeWidth="4" strokeLinecap="round" />
        <path d="M74 6L24 58" stroke="#f00" strokeWidth="2.600" strokeLinecap="round" />
        <path d="M7 75L20 52 22 58 29 59Z" fill="#f00" stroke="#a00" strokeWidth=".7" />
      </svg>
      <Watermark />
    </div>
  );
}
